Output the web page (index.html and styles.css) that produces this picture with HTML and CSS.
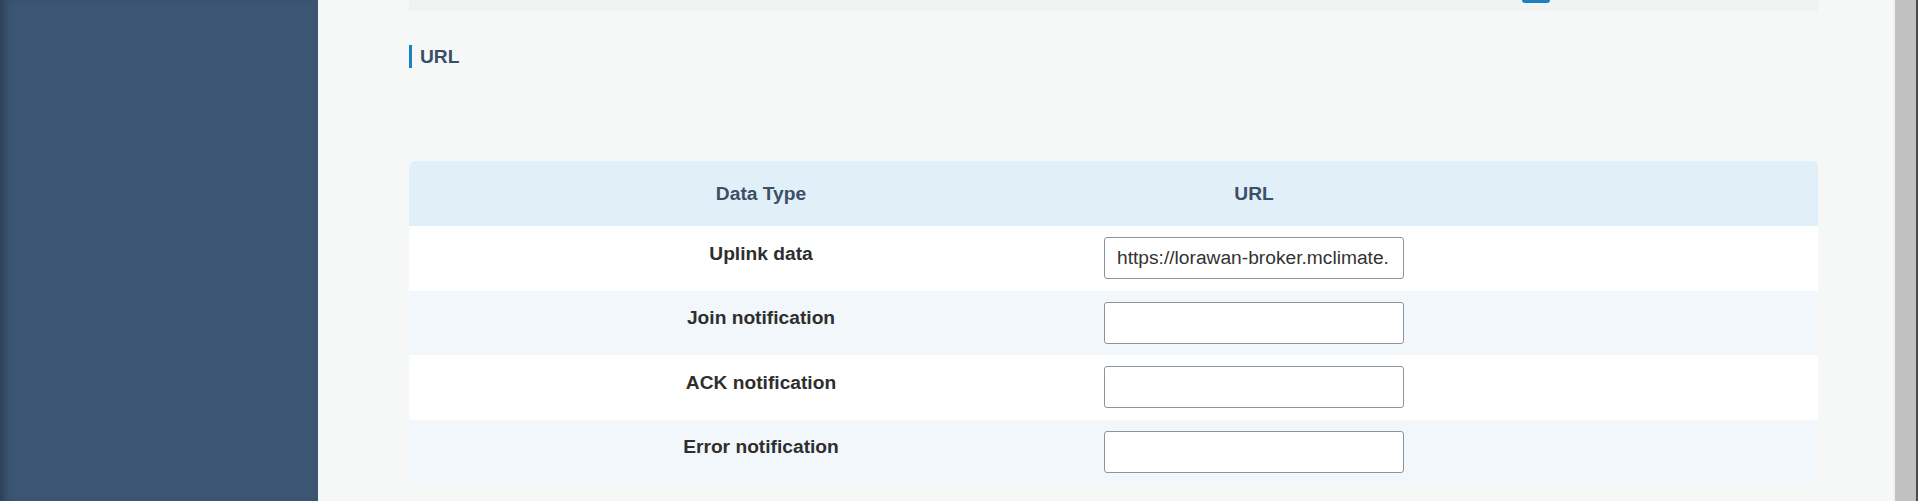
FILE: index.html
```html
<!DOCTYPE html>
<html lang="en">
<head>
<meta charset="utf-8">
<title>URL</title>
<link rel="stylesheet" href="styles.css">
</head>
<body>
<div class="app">
  <aside class="sidebar"></aside>
  <main class="main">
    <div class="topband"><span class="topband-btn"></span></div>
    <h2 class="section-title">URL</h2>
    <div class="table">
      <div class="row head">
        <div class="cell c1">Data Type</div>
        <div class="cell c2">URL</div>
      </div>
      <div class="row">
        <div class="cell c1 label">Uplink data</div>
        <div class="cell c2"><input class="field" type="text" value="https://lorawan-broker.mclimate.eu/lorawan/uplink"></div>
      </div>
      <div class="row alt">
        <div class="cell c1 label">Join notification</div>
        <div class="cell c2"><input class="field" type="text" value=""></div>
      </div>
      <div class="row">
        <div class="cell c1 label">ACK notification</div>
        <div class="cell c2"><input class="field" type="text" value=""></div>
      </div>
      <div class="row alt">
        <div class="cell c1 label">Error notification</div>
        <div class="cell c2"><input class="field" type="text" value=""></div>
      </div>
    </div>
  </main>
  <div class="scrollbar"><div class="thumb"></div></div>
</div>
</body>
</html>
```
FILE: styles.css
```css
html, body {
  margin: 0;
  padding: 0;
  height: 100%;
}
body {
  font-family: "Liberation Sans", Arial, sans-serif;
  font-size: 19.2px;
  overflow: hidden;
}
.app {
  display: flex;
  height: 501px;
}
.sidebar {
  width: 318px;
  flex-shrink: 0;
  background: #3b5573;
  box-shadow: inset 10px 0 10px -6px rgba(0, 0, 0, 0.28);
}
.main {
  flex: 1;
  min-width: 0;
  background: #f6f8f8;
  padding: 0 75px 0 91px;
}
.topband {
  height: 11px;
  background: #f0f2f4;
  display: flex;
  align-items: flex-start;
}
.topband-btn {
  margin-left: 1113px;
  width: 28px;
  height: 3px;
  background: #1b7fc2;
  border-radius: 0 0 4px 4px;
}
.section-title {
  margin: 34px 0 0;
  height: 23px;
  line-height: 23px;
  border-left: 3px solid #1f80c1;
  padding-left: 8px;
  font-size: 19.2px;
  font-weight: bold;
  color: #3a4f66;
}
.table {
  margin-top: 93px;
  border-radius: 6px 6px 0 0;
  overflow: hidden;
}
.row {
  display: flex;
  height: 64.5px;
  background: #ffffff;
}
.row.alt {
  background: #f2f7fc;
}
.row.head {
  height: 65px;
  background: #e1eff9;
  font-weight: bold;
  color: #3c4f66;
}
.cell {
  display: flex;
  align-items: center;
  justify-content: center;
}
.c1 {
  width: 704px;
  flex-shrink: 0;
}
.c2 {
  width: 282px;
  flex-shrink: 0;
}
.label {
  font-weight: bold;
  color: #2e2e2e;
  padding-bottom: 9px;
  box-sizing: border-box;
}
.field {
  flex-shrink: 0;
  width: 300px;
  height: 42px;
  box-sizing: border-box;
  border: 1px solid #8c939b;
  border-radius: 3px;
  padding: 0 15px 0 12px;
  background: #ffffff;
  font-family: "Liberation Sans", Arial, sans-serif;
  font-size: 19.2px;
  color: #333333;
  outline: none;
}
.scrollbar {
  width: 25px;
  flex-shrink: 0;
  display: flex;
  background: #f1f1f1;
}
.thumb {
  flex: 1;
  margin-left: 2px;
  background: #c1c1c1;
  border-right: 2px solid #4a4a4a;
}
```
